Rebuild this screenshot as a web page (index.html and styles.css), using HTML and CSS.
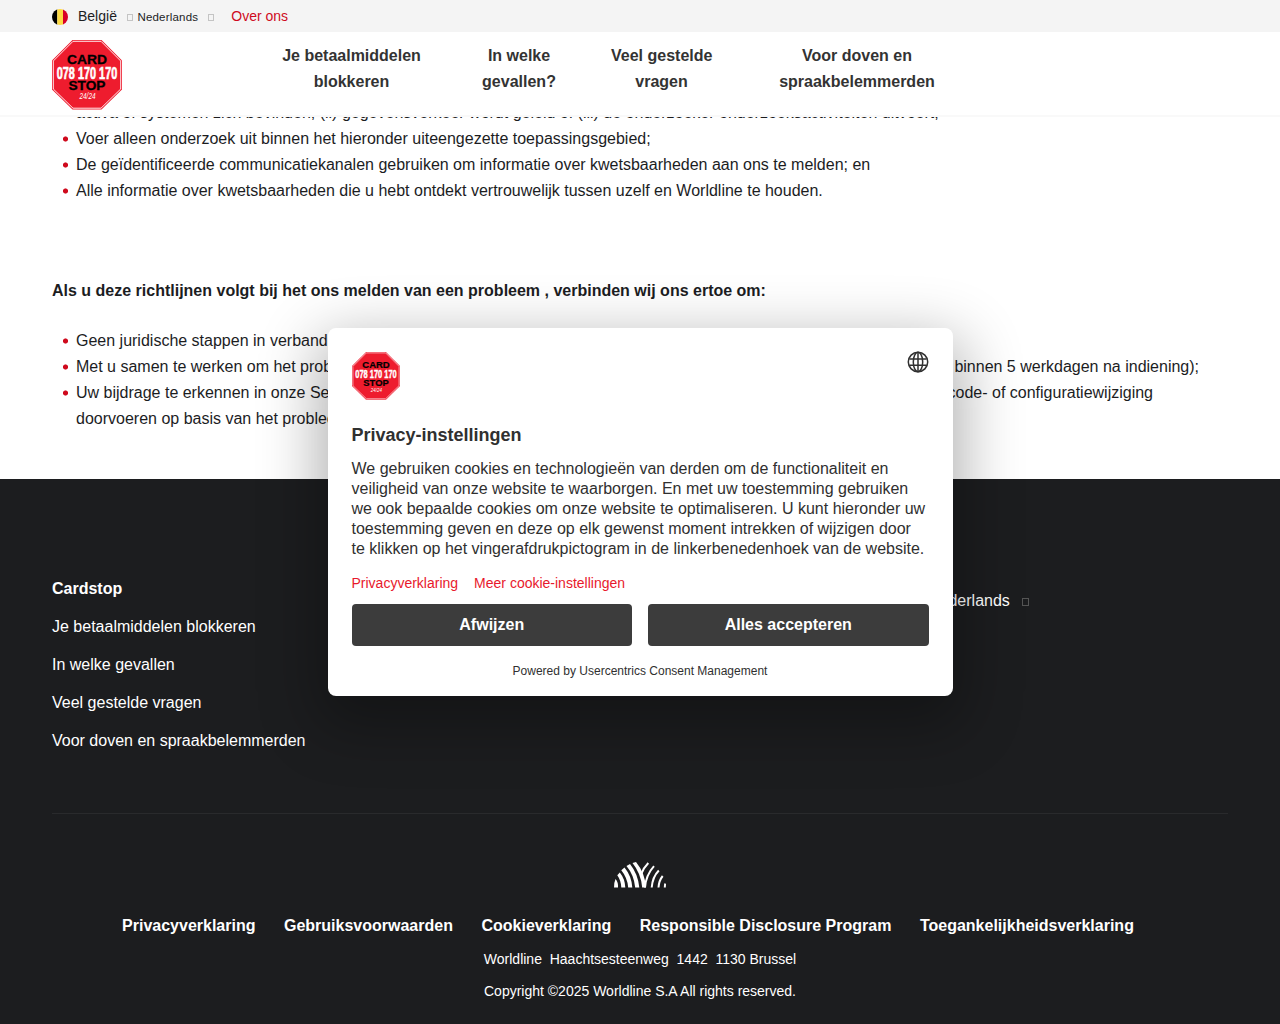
FILE: index.html
```html
<!DOCTYPE html>
<html lang="nl">
<head>
<meta charset="utf-8">
<title>Card Stop - Responsible Disclosure Program</title>
<link rel="stylesheet" href="styles.css">
</head>
<body>
<svg class="defs" width="0" height="0" aria-hidden="true">
  <symbol id="cardstop" viewBox="0 0 70 70">
    <path d="M20.5 0h29L70 20.5v29L49.500 69.500h-29L0 49.500v-29z" fill="#ee1c2e"/>
    <path d="M21 1.300h28L68.700 21v28L49 68.200H21L1.300 49V21z" fill="none" stroke="#fff" stroke-width=".9"/>
    <g text-anchor="middle" font-family="Liberation Sans, Arial, sans-serif" font-weight="bold">
      <text x="35" y="23.800" font-size="12.800" textLength="40" lengthAdjust="spacingAndGlyphs" fill="#000" stroke="#000" stroke-width=".3">CARD</text>
      <text transform="translate(35 38.500) scale(1 1.250)" font-size="12.800" textLength="60.500" lengthAdjust="spacingAndGlyphs" fill="#fff" stroke="#fff" stroke-width=".5">078 170 170</text>
      <text x="35" y="49.700" font-size="12.300" textLength="37" lengthAdjust="spacingAndGlyphs" fill="#000" stroke="#000" stroke-width=".3">STOP</text>
      <text x="35.500" y="58.500" font-size="9" font-weight="normal" font-style="italic" textLength="16" lengthAdjust="spacingAndGlyphs" fill="#fff">24/24</text>
    </g>
  </symbol>
</svg>

<div class="topbar">
  <svg class="flag" viewBox="0 0 16 16"><clipPath id="round"><circle cx="8" cy="8" r="8"/></clipPath><g clip-path="url(#round)"><path fill="#000" d="M0 0h5.300v16H0z"/><path fill="#fdda44" d="M5.300 0h5.700v16H5.300z"/><path fill="#d80027" d="M11 0h5v16h-5z"/></g></svg>
  <span class="country">België</span>
  <span class="glyph"></span>
  <span class="lang">Nederlands</span>
  <span class="glyph"></span>
  <a class="about">Over ons</a>
</div>
<header class="header">
  <svg class="logo"><use href="#cardstop"/></svg>
  <nav class="nav">
    <a class="nav-pay">Je betaalmiddelen<br>blokkeren</a>
    <a class="nav-case">In welke<br>gevallen?</a>
    <a class="nav-faq">Veel gestelde<br>vragen</a>
    <a class="nav-deaf">Voor doven en<br>spraakbelemmerden</a>
  </nav>
</header>

<main class="main">
  <ul class="list list-scrolled">
    <li class="continued">activa of systemen zich bevinden, (ii) gegevensverkeer wordt geleid of (iii) de onderzoeker onderzoeksactiviteiten uitvoert;</li>
    <li>Voer alleen onderzoek uit binnen het hieronder uiteengezette toepassingsgebied;</li>
    <li>De geïdentificeerde communicatiekanalen gebruiken om informatie over kwetsbaarheden aan ons te melden; en</li>
    <li>Alle informatie over kwetsbaarheden die u hebt ontdekt vertrouwelijk tussen uzelf en Worldline te houden.</li>
  </ul>
  <h2 class="subtitle">Als u deze richtlijnen volgt bij het ons melden van een probleem , verbinden wij ons ertoe om:</h2>
  <ul class="list">
    <li>Geen juridische stappen in verband</li>
    <li><span class="split"><span>Met u samen te werken om het probleem</span><span class="tail-one">binnen 5 werkdagen na indiening);</span></span></li>
    <li><span class="split"><span>Uw bijdrage te erkennen in onze Security</span><span class="tail-two">code- of configuratiewijziging</span></span>doorvoeren op basis van het probleem.</li>
  </ul>
</main>

<footer class="footer">
  <div class="footer-top">
    <div class="footer-menu">
      <strong>Cardstop</strong>
      <a>Je betaalmiddelen blokkeren</a>
      <a>In welke gevallen</a>
      <a>Veel gestelde vragen</a>
      <a>Voor doven en spraakbelemmerden</a>
    </div>
    <div class="footer-lang"><span>Nederlands</span><span class="glyph"></span></div>
  </div>
  <svg class="worldline" viewBox="0 0 52 26" fill="#fff">
    <path d="M1.500 17Q4.500 20.500 4 25.500H0Q0 20.500 1.500 17z"/>
    <path d="M3.300 13.300L5.800 10.500Q11 17 11.300 25.500H7.300Q7 18.500 3.300 13.300z"/>
    <path d="M7.300 8.300L10.500 5.600Q17.500 14 18.300 25.500H14.200Q13.500 16 7.300 8.300z"/>
    <path d="M12.500 4L16 2Q24 12 25.300 25.500H21.200Q20 13 12.500 4z"/>
    <path d="M18.500 1L22 0Q31 11 32 25.500H28.200Q27 11.500 18.500 1z"/>
    <g fill="none" stroke="#fff" stroke-width="2">
      <path d="M34.300 1Q29 6.500 27 12.500M40 4.200Q32 13 31 25.500M44.800 8.500Q38.500 15 37.700 25.500M48.700 14Q45 18.500 44.500 25.500M51.300 21.500Q50.800 23.500 50.800 25.500"/>
    </g>
  </svg>
  <nav class="legal">
    <a>Privacyverklaring</a><a>Gebruiksvoorwaarden</a><a>Cookieverklaring</a><a>Responsible Disclosure Program</a><a>Toegankelijkheidsverklaring</a>
  </nav>
  <p class="small">Worldline&nbsp; Haachtsesteenweg&nbsp; 1442&nbsp; 1130 Brussel</p>
  <p class="small">Copyright ©2025 Worldline S.A All rights reserved.</p>
</footer>

<section class="dialog" role="dialog" aria-label="Privacy-instellingen">
  <div class="dialog-head">
    <svg class="dialog-logo"><use href="#cardstop"/></svg>
    <svg class="globe" viewBox="0 0 22 22" fill="none" stroke="#303030" stroke-width="1.500"><circle cx="11" cy="11" r="9.700"/><ellipse cx="11" cy="11" rx="4.700" ry="9.700"/><path d="M11 1.300v19.400M2.300 8h17.400M2.300 14.300h17.400"/></svg>
  </div>
  <h1 class="dialog-title">Privacy-instellingen</h1>
  <p class="dialog-text">We gebruiken cookies en technologieën van derden om de functionaliteit en<br>veiligheid van onze website te waarborgen. En met uw toestemming gebruiken<br>we ook bepaalde cookies om onze website te optimaliseren. U kunt hieronder uw<br>toestemming geven en deze op elk gewenst moment intrekken of wijzigen door<br>te klikken op het vingerafdrukpictogram in de linkerbenedenhoek van de website.</p>
  <div class="dialog-links"><a>Privacyverklaring</a><a>Meer cookie-instellingen</a></div>
  <div class="buttons"><button>Afwijzen</button><button>Alles accepteren</button></div>
  <div class="powered">Powered by Usercentrics Consent Management</div>
</section>
</body>
</html>
```

FILE: styles.css
```css
* { box-sizing: border-box; }
body {
  margin: 0;
  height: 1024px;
  overflow: hidden;
  display: flex;
  flex-direction: column;
  background: #fff;
  color: #1c1d1f;
  font: 16px/26px "Liberation Sans", Arial, sans-serif;
}
.defs { position: absolute; }
.glyph { width: 6px; height: 7px; border: 1px solid #c4c4c4; flex: none; }
.topbar {
  height: 32px;
  flex: none;
  display: flex;
  align-items: center;
  padding: 0 52px;
  background: #f4f4f4;
  font-size: 14px;
}
.flag { width: 16px; height: 16px; margin: 1px 10px 0 0; }
.country { margin-right: 10px; }
.topbar .glyph { margin-top: 3px; }
.lang { font-size: 11.5px; letter-spacing: .2px; margin: 2px 10px 0 4.5px; }
.about { margin-left: 17px; color: #cf0a1d; }
.header {
  height: 85px;
  flex: none;
  display: flex;
  align-items: flex-start;
  padding: 8px 52px 0;
  border-bottom: 2px solid #f9f9f9;
}
.logo { width: 70px; height: 70px; flex: none; }
.nav {
  display: flex;
  margin: 3px 0 0 160px;
  color: #333;
  font-weight: bold;
  text-align: center;
  white-space: nowrap;
}
.nav-pay { width: 139px; margin-right: 61px; }
.nav-case { width: 74px; margin-right: 55px; }
.nav-faq { width: 101px; margin-right: 67px; }
.nav-deaf { width: 156px; }
.main { height: 362px; flex: none; overflow: hidden; padding: 0 52px; }
.list { margin: 0; padding: 0 0 0 24px; list-style: none; white-space: nowrap; }
.list-scrolled { margin-top: -17px; }
.list li { display: block; }
.list li:not(.continued) {
  background: radial-gradient(circle at 2.5px 3px, #cf0a1d 2.2px, transparent 2.9px) 0 10px / 6px 6px no-repeat;
  margin-left: -13px;
  padding-left: 13px;
}
.subtitle { margin: 74px 0 24px; font-size: 16px; line-height: 26px; }
.split { display: flex; justify-content: space-between; }
.tail-one { margin-right: 29px; }
.tail-two { margin-right: 75px; }
.footer {
  flex: 1;
  padding: 97px 52px 0;
  background: #1c1d1f;
  color: #fff;
  text-align: center;
}
.footer-top {
  display: grid;
  grid-template-columns: 876px 1fr;
  height: 238px;
  border-bottom: 1px solid #292a2c;
  text-align: left;
}
.footer-menu { display: flex; flex-direction: column; gap: 12px; }
.footer-lang { display: flex; align-items: center; height: 26px; margin-top: 12px; }
.footer-lang .glyph { border-color: #555; margin: 2px 0 0 12px; width: 7px; height: 8px; }
.worldline { display: block; width: 52px; height: 26px; margin: 48px auto 25px; }
.legal { display: flex; justify-content: center; gap: 28.5px; margin-right: 24px; font-weight: bold; }
.small { margin: 7px 0 0; font-size: 14px; line-height: 26px; }
.small + .small { margin-top: 6px; }
.dialog {
  position: absolute;
  left: 327.5px;
  top: 328px;
  width: 625px;
  height: 368px;
  padding: 24px;
  border-radius: 8px;
  background: #fff;
  color: #303030;
  box-shadow: 0 20px 60px 10px rgba(0, 0, 0, .3);
}
.dialog-head { display: flex; justify-content: space-between; }
.dialog-logo { width: 48px; height: 48px; }
.globe { width: 22px; height: 22px; margin-top: -1px; }
.dialog-title { margin: 22px 0 14px; font-size: 18px; line-height: 26px; }
.dialog-text { margin: -3px 0 0; line-height: 20px; white-space: nowrap; }
.dialog-links { display: flex; gap: 16px; margin-top: 13px; font-size: 14px; line-height: 22px; color: #e8192c; }
.buttons { display: grid; grid-template-columns: 1fr 1fr; gap: 16px; margin-top: 10px; }
.buttons button {
  height: 42px;
  padding: 0;
  border: 0;
  border-radius: 4px;
  background: #3c3c3c;
  color: #fff;
  font: bold 16px "Liberation Sans", Arial, sans-serif;
}
.powered { margin-top: 17px; font-size: 12px; line-height: 16px; text-align: center; }
```
